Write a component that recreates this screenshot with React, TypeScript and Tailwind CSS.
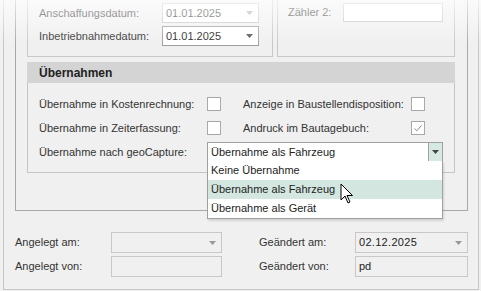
import React from 'react'

function Arrow({ color = '#555' }: { color?: string }) {
  return (
    <svg width="7" height="4" viewBox="0 0 7 4">
      <path d="M0 0h7L3.5 4z" fill={color} />
    </svg>
  )
}

function Checkbox({ checked }: { checked?: boolean }) {
  return (
    <div className="w-[14px] h-[14px] border border-[#a8a8a8] bg-white flex items-center justify-center">
      {checked && (
        <svg width="10" height="10" viewBox="0 0 10 10">
          <path d="M1.5 5.5l2.3 2.3L8.5 2.5" fill="none" stroke="#8a8a8a" strokeWidth="1" />
        </svg>
      )}
    </div>
  )
}

function CheckRow({ left, right, checked }: { left: string; right: string; checked?: boolean }) {
  return (
    <div className="flex items-center h-[20px]">
      <span className="w-[168px]">{left}</span>
      <Checkbox />
      <span className="ml-[22px] w-[168px]">{right}</span>
      <Checkbox checked={checked} />
    </div>
  )
}

export default function App() {
  return (
    <div className="relative w-[481px] h-[291px] overflow-hidden bg-[#f0f0f0] font-['Liberation_Sans',Arial,sans-serif] text-[11px] text-[#333]">
      <div className="ml-[3px] w-[476px] h-[290px] border-x border-b border-[#c6c6c6] pl-[11px] flex flex-col">
        <div className="w-[453px] h-[211px] border-x border-b border-[#a8a8a8] pl-[11px] flex flex-col">
          {/* top group boxes */}
          <div className="flex gap-[4px] h-[57px]">
            <div className="w-[246px] border-x border-b border-[#c8c8c8] pl-[11px] pt-[3px] flex flex-col gap-[3px]">
              <div className="flex items-center h-[20px]">
                <span className="w-[123px]">Anschaffungsdatum:</span>
                <div className="w-[97px] h-[20px] border border-[#c8c8c8] bg-white flex items-center justify-between pl-[3px] pr-[5px]">
                  <span>01.01.2025</span>
                  <Arrow color="#aaa" />
                </div>
              </div>
              <div className="flex items-center h-[20px]">
                <span className="w-[123px]">Inbetriebnahmedatum:</span>
                <div className="w-[97px] h-[20px] border border-[#a0a0a0] bg-white flex items-center justify-between pl-[3px] pr-[5px] text-[#222]">
                  <span>01.01.2025</span>
                  <Arrow />
                </div>
              </div>
            </div>
            <div className="w-[178px] border-x border-b border-[#c8c8c8] pl-[10px] pt-[3px]">
              <div className="flex items-center h-[19px]">
                <span className="w-[55px]">Zähler 2:</span>
                <div className="w-[100px] h-[19px] border border-[#c8c8c8] bg-white" />
              </div>
            </div>
          </div>

          {/* Übernahmen */}
          <div className="mt-[5px] w-[428px]">
            <div className="h-[21px] bg-[#d4d4d4] pl-[12px] flex items-center font-bold text-[12px] text-[#222]">Übernahmen</div>
            <div className="border-x border-b border-[#c4c4c4] pl-[11px] pt-[11px] pb-[10px] flex flex-col gap-[4px]">
              <CheckRow left="Übernahme in Kostenrechnung:" right="Anzeige in Baustellendisposition:" />
              <CheckRow left="Übernahme in Zeiterfassung:" right="Andruck im Bautagebuch:" checked />
              <div className="flex items-center h-[20px]">
                <span className="w-[168px]">Übernahme nach geoCapture:</span>
                <div className="relative w-[236px] h-[20px] border border-[#a0a0a0] bg-white flex text-[#222]">
                  <span className="flex-1 pl-[3px] flex items-center">Übernahme als Fahrzeug</span>
                  <div className="w-[14px] border-l border-[#a0a0a0] bg-[#d6eae3] flex items-center justify-center">
                    <Arrow color="#444" />
                  </div>
                  <div className="absolute left-[-1px] top-full w-[236px] border-x border-b border-[#a0a0a0] bg-white flex flex-col z-10 shadow-[1px_2px_2px_rgba(0,0,0,0.12)]">
                    <div className="h-[19px] pl-[3px] flex items-center">Keine Übernahme</div>
                    <div className="h-[19px] pl-[3px] flex items-center bg-[#d3e7e0]">Übernahme als Fahrzeug</div>
                    <div className="h-[19px] pl-[3px] flex items-center">Übernahme als Gerät</div>
                  </div>
                </div>
              </div>
            </div>
          </div>
        </div>

        {/* bottom fields */}
        <div className="mt-[21px] flex flex-col gap-[3px]">
          <div className="flex items-center h-[21px]">
            <span className="w-[96px]">Angelegt am:</span>
            <div className="w-[111px] h-[21px] border border-[#c8c8c8] flex items-center justify-end pr-[5px]">
              <Arrow color="#999" />
            </div>
            <span className="ml-[37px] w-[96px]">Geändert am:</span>
            <div className="w-[113px] h-[21px] border border-[#c8c8c8] flex items-center justify-between pl-[3px] pr-[5px] text-[#222]">
              <span className="tracking-[0.3px]">02.12.2025</span>
              <Arrow color="#999" />
            </div>
          </div>
          <div className="flex items-center h-[21px]">
            <span className="w-[96px]">Angelegt von:</span>
            <div className="w-[111px] h-[21px] border border-[#c8c8c8]" />
            <span className="ml-[37px] w-[96px]">Geändert von:</span>
            <div className="w-[113px] h-[21px] border border-[#c8c8c8] flex items-center pl-[3px] text-[#222]">pd</div>
          </div>
        </div>
      </div>

      {/* mouse cursor */}
      <svg className="absolute left-[340px] top-[183px] z-20" width="13" height="21" viewBox="0 0 13 21">
        <path d="M1 1v16l4-4 3 7 2-1-3-6.5h5.5z" fill="#fff" stroke="#000" strokeWidth="1" strokeLinejoin="miter" />
      </svg>

      {/* top fade */}
      <div className="absolute inset-x-0 top-0 h-[44px] pointer-events-none bg-linear-to-b from-[rgba(255,255,255,0.72)] to-[rgba(255,255,255,0)] z-30" />
    </div>
  )
}
